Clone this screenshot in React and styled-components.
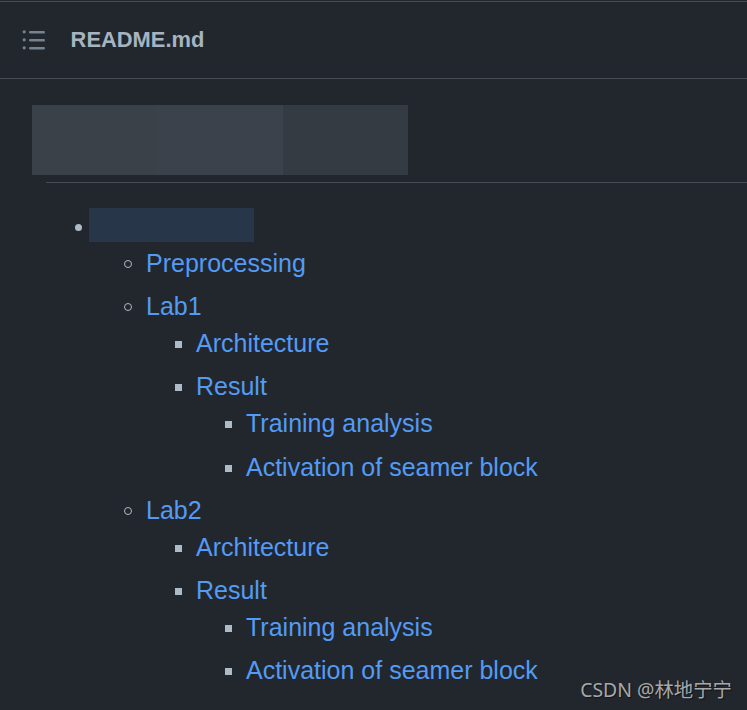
import React from "react";
import styled, { createGlobalStyle } from "styled-components";

const Global = createGlobalStyle`
  html, body { margin: 0; padding: 0; background: #22272e; }
  body { font-family: "Liberation Sans", Arial, sans-serif; }
`;

const Page = styled.div`
  position: relative;
  width: 747px;
  height: 710px;
  overflow: hidden;
  background: #22272e;
  padding-top: 1px;
  box-sizing: border-box;
`;

const Header = styled.header`
  display: flex;
  align-items: center;
  gap: 24px;
  height: 78px;
  box-sizing: border-box;
  padding: 0 0 0 21px;
  border-top: 1px solid #444c56;
  border-bottom: 1px solid #444c56;
`;

const Title = styled.h2`
  margin: 0;
  font-size: 21.9px;
  font-weight: 700;
  color: #a6b4c1;
`;

const Article = styled.article`
  padding: 26px 0 0 46px;
`;

const Banner = styled.div`
  display: grid;
  grid-template-columns: 123px 128px 125px;
  width: 376px;
  height: 70px;
  margin-left: -14px;
`;

const BannerPart = styled.div`
  background: ${(p) => p.$tone};
`;

const Rule = styled.hr`
  height: 1px;
  margin: 7px 0 0;
  border: 0;
  background: #444c56;
`;

const List = styled.ul`
  margin: ${(p) => (p.$top ? "25px 0 0" : "0")};
  padding: 0 0 0 50px;
  list-style: none;
  font-size: 25px;
  line-height: 37px;
`;

const markers = {
  disc: `
    left: -21px;
    top: 16px;
    width: 7px;
    height: 7px;
    border-radius: 50%;
    background: #adbac7;
  `,
  circle: `
    left: -22px;
    top: 15px;
    width: 8px;
    height: 8px;
    border-radius: 50%;
    border: 1px solid #adbac7;
    box-sizing: border-box;
  `,
  square: `
    left: -21px;
    top: 16px;
    width: 7px;
    height: 7px;
    background: #adbac7;
  `,
};

const Item = styled.li`
  position: relative;
  margin-top: ${(p) => (p.$first ? "0" : "6.2px")};

  &::before {
    content: "";
    position: absolute;
    ${(p) => markers[p.$marker]}
  }
`;

const Link = styled.a`
  color: #539bf5;
  text-decoration: none;
`;

const Redacted = styled.span`
  display: inline-block;
  width: 165px;
  height: 34px;
  margin-left: -7px;
  vertical-align: top;
  background: #283649;
`;

const Watermark = styled.div`
  position: absolute;
  right: 15px;
  bottom: 8px;
  font-family: "Noto Sans", "Noto Sans CJK SC", sans-serif;
  font-size: 19.4px;
  line-height: 24px;
  color: #a8a8a8;
  text-shadow: 1px 1px 1px #111418;
`;

const ListIcon = () => (
  <svg width="25.6" height="25.6" viewBox="0 0 16 16" fill="#768390" aria-hidden="true">
    <path d="M5.75 2.5h8.5a.75.75 0 0 1 0 1.5h-8.5a.75.75 0 0 1 0-1.5Zm0 5h8.5a.75.75 0 0 1 0 1.5h-8.5a.75.75 0 0 1 0-1.5Zm0 5h8.5a.75.75 0 0 1 0 1.5h-8.5a.75.75 0 0 1 0-1.5ZM2 14a1 1 0 1 1 0-2 1 1 0 0 1 0 2Zm1-6a1 1 0 1 1-2 0 1 1 0 0 1 2 0ZM2 4a1 1 0 1 1 0-2 1 1 0 0 1 0 2Z" />
  </svg>
);

const labSection = (name) => (
  <Item $marker="circle">
    <Link>{name}</Link>
    <List>
      <Item $first $marker="square"><Link>Architecture</Link></Item>
      <Item $marker="square">
        <Link>Result</Link>
        <List>
          <Item $first $marker="square"><Link>Training analysis</Link></Item>
          <Item $marker="square"><Link>Activation of seamer block</Link></Item>
        </List>
      </Item>
    </List>
  </Item>
);

export default function App() {
  return (
    <Page>
      <Global />
      <Header>
        <ListIcon />
        <Title>README.md</Title>
      </Header>
      <Article>
        <Banner>
          <BannerPart $tone="#3a4148" />
          <BannerPart $tone="#3b424b" />
          <BannerPart $tone="#353b43" />
        </Banner>
        <Rule />
        <List $top>
          <Item $first $marker="disc">
            <Redacted />
            <List>
              <Item $first $marker="circle"><Link>Preprocessing</Link></Item>
              {labSection("Lab1")}
              {labSection("Lab2")}
            </List>
          </Item>
        </List>
      </Article>
      <Watermark>CSDN @林地宁宁</Watermark>
    </Page>
  );
}
